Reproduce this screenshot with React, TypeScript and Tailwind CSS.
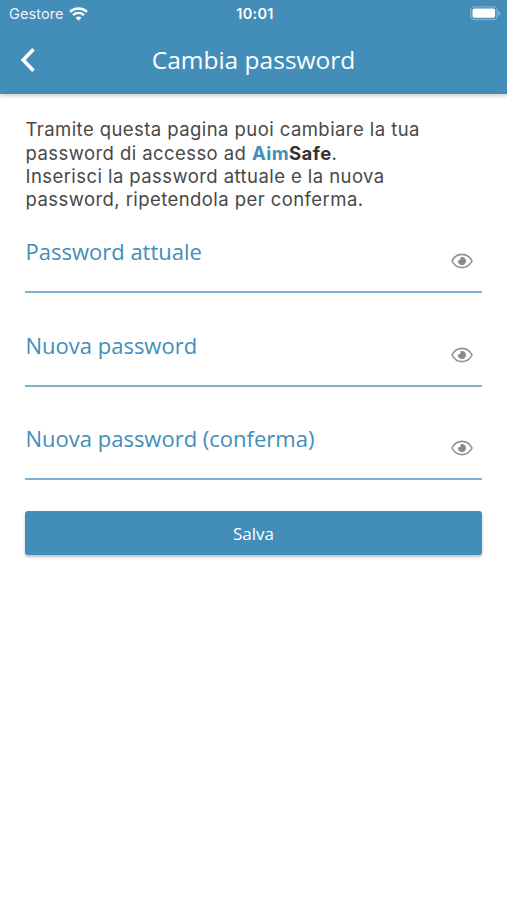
function WifiIcon() {
  return (
    <svg className="h-[14px] w-[19px]" viewBox="0 0 19 14" fill="none" stroke="white">
      <path d="M1.1 4.9a12.1 12.1 0 0 1 16.8 0" strokeWidth="2.6" />
      <path d="M4.1 8.1a7.8 7.8 0 0 1 10.8 0" strokeWidth="2.3" />
      <path d="M9.5 13.8 6.6 10.8a4.3 4.3 0 0 1 5.8 0Z" fill="white" stroke="none" />
    </svg>
  );
}

function BatteryIcon() {
  return (
    <svg className="h-[15px] w-[31px]" viewBox="0 0 31 15" fill="none">
      <rect x="0.7" y="0.9" width="26.4" height="12.6" rx="3.6" stroke="white" strokeOpacity="0.3" strokeWidth="1.4" />
      <rect x="2.5" y="2.6" width="22.6" height="9.2" rx="1.8" fill="white" />
      <path d="M28.4 4.8c2.4 1 2.4 4 0 5Z" fill="white" fillOpacity="0.4" />
    </svg>
  );
}

function EyeIcon() {
  return (
    <svg className="h-[16px] w-[22px]" viewBox="0 0 22 16" fill="none">
      <path d="M1 8C3 3.9 6.7 1.4 11 1.4S19 3.9 21 8c-2 4.1-5.7 6.6-10 6.6S3 12.1 1 8Z" stroke="#929292" strokeWidth="1.6" />
      <path d="M11 3.9a4.1 4.1 0 1 1-4.1 3.4c.7.2 1.5 0 2-.5.7-.7.9-1.7.6-2.6.4-.2.9-.3 1.5-.3Z" fill="#8a8a8a" />
    </svg>
  );
}

function PasswordField({ label }: { label: string }) {
  return (
    <div className="flex h-[55px] justify-between border-b-2 border-[#7db0d1] pr-[9.5px]">
      <label className="-mt-px pl-[0.5px] font-['Open_Sans',sans-serif] text-[22px] leading-[28px] whitespace-nowrap text-[#438db9]">
        {label}
      </label>
      <button type="button" aria-label={label} className="mt-[15px] h-[16px]">
        <EyeIcon />
      </button>
    </div>
  );
}

export default function App() {
  return (
    <div className="h-[900px] w-full bg-white font-[Inter,sans-serif]">
      <header className="h-[94px] bg-[#438db9] text-white shadow-[0_2px_4px_rgba(0,0,0,0.2)]">
        <div className="grid h-[27px] grid-cols-3 items-center pr-[6px] pl-[9px]">
          <div className="flex items-center gap-[5px]">
            <span className="text-[14.5px] tracking-[0.1px] text-white/90">Gestore</span>
            <WifiIcon />
          </div>
          <span className="text-center text-[14.5px] font-semibold tracking-[0.3px]">10:01</span>
          <div className="flex justify-end">
            <BatteryIcon />
          </div>
        </div>
        <div className="grid h-[65px] grid-cols-[60px_1fr_60px] items-center">
          <button type="button" aria-label="Indietro" className="ml-[20px] w-[16px]">
            <svg className="h-[26px] w-[16px]" viewBox="0 0 16 26" fill="none" stroke="white" strokeWidth="3.6">
              <path d="M13.5 2.3 3.2 13l10.3 10.7" />
            </svg>
          </button>
          <h1 className="pt-[2px] text-center font-['Open_Sans',sans-serif] text-[24.5px]">Cambia password</h1>
        </div>
      </header>
      <main className="px-[25px] pt-[24.4px]">
        <p className="pl-[0.5px] text-[18.5px] leading-[23.3px] tracking-[0.43px] whitespace-nowrap text-[#484848]">
          Tramite questa pagina puoi cambiare la tua
          <br />
          password di accesso ad <b className="text-[#438db9]">Aim</b>
          <b className="text-[#333]">Safe</b>.
          <br />
          Inserisci la password attuale e la nuova
          <br />
          password, ripetendola per conferma.
        </p>
        <form className="mt-[26.6px] flex flex-col">
          <div className="flex flex-col gap-[38.5px]">
            <PasswordField label="Password attuale" />
            <PasswordField label="Nuova password" />
            <PasswordField label="Nuova password (conferma)" />
          </div>
          <button
            type="button"
            className="mt-[31px] h-[44px] rounded-[3px] bg-[#438db9] pt-[2px] font-['Open_Sans',sans-serif] text-[17px] text-white shadow-[0_2px_3px_rgba(0,0,0,0.25)]"
          >
            Salva
          </button>
        </form>
      </main>
    </div>
  );
}
